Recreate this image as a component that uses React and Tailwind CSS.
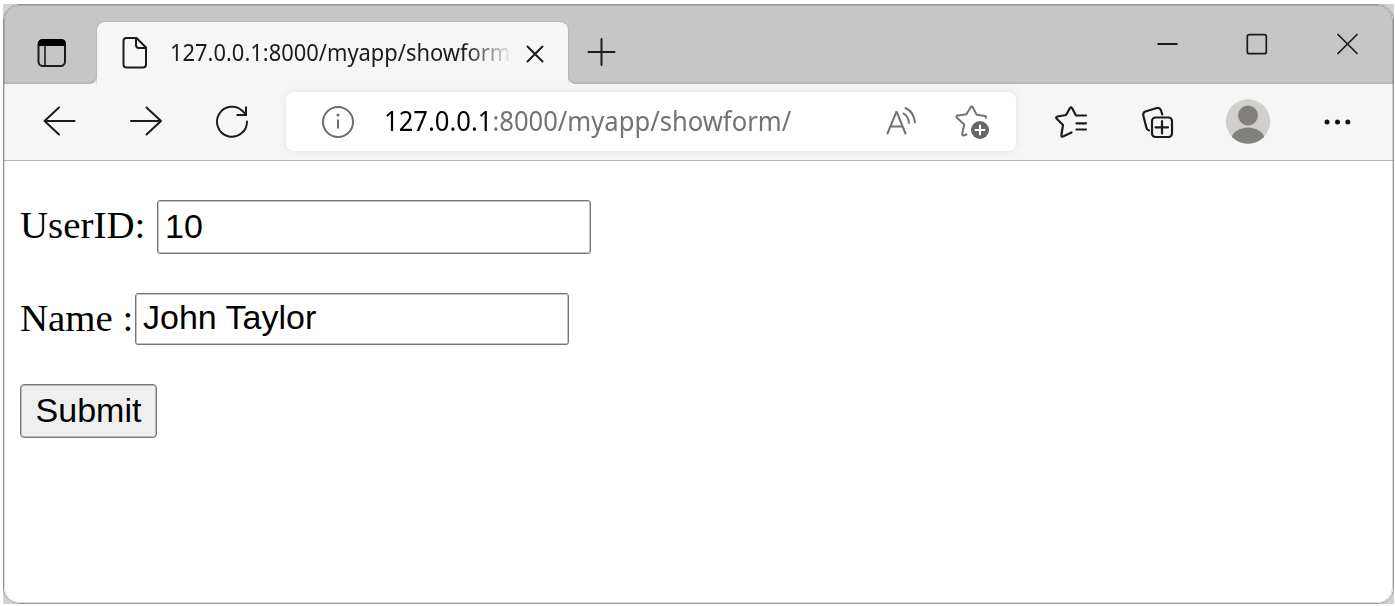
import React from "react";

function Icon({ box, className = "", children, color = "#1b1b1b", width = 2 }) {
  const [, , w, h] = box.split(" ");
  return (
    <svg
      viewBox={box}
      width={w}
      height={h}
      fill="none"
      stroke={color}
      strokeWidth={width}
      strokeLinecap="round"
      strokeLinejoin="round"
      className={`shrink-0 ${className}`}
    >
      {children}
    </svg>
  );
}

function TabStrip() {
  return (
    <div className="flex h-[79px] shrink-0 bg-[#f6f6f6]">
      <div className="w-[93px] shrink-0 rounded-br-lg bg-[#c6c6c6] pl-8 pt-[33px] shadow-[inset_0_-2px_1px_#b6b6b6]">
        <Icon box="36 38 32 30">
          <rect x="38.5" y="40" width="26.5" height="26" rx="4.5" />
          <path d="M38 46v-2q0-5 5-5h18q5 0 5 5v2z" fill="#000" stroke="none" />
          <path d="M45 46v19" strokeWidth="1.6" />
        </Icon>
      </div>
      <div className="w-[471px] shrink-0 bg-[#c6c6c6] pt-[17px]">
        <div className="flex h-[62px] items-center rounded-t-lg bg-[#f6f6f6] pl-6 shadow-[0_0_2px_#999] [clip-path:inset(-2px_-2px_0_-2px)]">
          <Icon box="121 36 28 34">
            <path d="M126.500 38h10l9.500 9.500v17q0 3-3 3h-16.500q-3 0-3-3v-23.500q0-3 3-3z" />
            <path d="M136 38v7q0 3 3 3h7" />
          </Icon>
          <div className="mb-[3px] ml-[21px] w-[339px] overflow-hidden whitespace-nowrap font-['Noto_Sans'] text-[23.5px] leading-8 text-[#1b1b1b] [mask-image:linear-gradient(to_right,#000_87%,transparent_101%)]">
            <span className="inline-block origin-left scale-x-[0.932]">127.0.0.1:8000/myapp/showform</span>
          </div>
          <Icon box="524 43 22 22" className="ml-[15px] mt-[2px]">
            <path d="M527.500 46.500l15 15M542.500 46.500l-15 15" />
          </Icon>
        </div>
      </div>
      <div className="flex grow rounded-bl-lg bg-[#c6c6c6] pl-[18px] shadow-[inset_0_-2px_1px_#b6b6b6]">
        <Icon box="586 36 30 32" className="mt-[31px]">
          <path d="M588.500 52h26M601.500 39v26" />
        </Icon>
        <Icon box="1154 30 26 30" className="ml-auto mt-[25px]" width={1.8}>
          <path d="M1157.500 44h20" strokeLinecap="butt" />
        </Icon>
        <Icon box="1244 30 26 30" className="ml-16 mt-[25px]" width={1.7}>
          <rect x="1247.300" y="34.700" width="19" height="19" rx="2" />
        </Icon>
        <Icon box="1334 30 26 30" className="ml-16 mr-[33px] mt-[25px]" width={1.7}>
          <path d="M1338 34.500l19 19M1357 34.500l-19 19" />
        </Icon>
      </div>
    </div>
  );
}

function Toolbar() {
  return (
    <div className="flex h-[77px] shrink-0 items-center border-b border-[#b4b4b4] bg-[#f6f6f6]">
      <Icon box="42 105 36 34" className="ml-[38px]">
        <path d="M44.500 121h30M59 107.500l-14.500 13.500 14.500 13.500" />
      </Icon>
      <Icon box="128 105 36 34" className="ml-[50px]">
        <path d="M131 121h30M146.500 107.500l14.500 13.500-14.500 13.500" />
      </Icon>
      <Icon box="214 104 36 36" className="ml-[50px]">
        <path d="M247 121.500A15 15 0 1 1 243 111.500l3 3" />
        <path d="M246 106.500v8.500h-9.500" strokeLinecap="butt" strokeLinejoin="miter" />
      </Icon>
      <div className="mb-px ml-9 flex h-[59px] w-[730px] items-center rounded-lg bg-white shadow-[0_0_7px_#e2e2e2]">
        <Icon box="320 104 36 36" className="ml-[34px]" color="#6c6c6c">
          <circle cx="338" cy="122" r="15" />
          <path d="M338 119.500v9" strokeLinecap="butt" />
          <circle cx="338" cy="115" r="1.600" fill="#6c6c6c" stroke="none" />
        </Icon>
        <div className="mb-[3px] ml-7 w-[430px] whitespace-nowrap font-['Noto_Sans'] text-[28px] leading-10 text-[#737373]">
          <span className="inline-block origin-left scale-x-[0.914]">
            <span className="text-black">127.0.0.1</span>:8000/myapp/showform/
          </span>
        </div>
        <Icon box="884 102 36 38" className="ml-[70px]" color="#737373">
          <path d="M887.500 132.500l9-22 9 22M890.500 125.500h12" strokeLinejoin="bevel" />
          <path d="M903.500 112.500q5 3 5.500 9.500M905.500 107q8.500 4 9.500 14.500" />
        </Icon>
        <Icon box="952 102 40 40" className="ml-8" color="#737373">
          <path d="M966.500 134.500l-3 1q-1.500 0-1.300-1.500l2-9.500-7.500-7q-1-1.500 1-2l8.700-1.200 4.300-7q1-1.500 2 0l4 7.400 8.500 1.300q1.500.5.500 1.800" />
          <circle cx="980" cy="130" r="9" fill="#666" stroke="none" />
          <path d="M975.500 130h9M980 125.500v9" stroke="#fff" />
        </Icon>
      </div>
      <Icon box="1052 102 40 38" className="ml-9" width={2.2}>
        <path d="M1071.500 131.500l-8.500 4q-2 .6-1.600-1.500l1.600-10-6.500-6.500q-1-1.500 1-2l8.500-1.500 4-7q1-1.500 2 0l4 7.500h10" />
        <path d="M1076.500 122.300h9.500M1076.500 128.500h9.500" />
      </Icon>
      <Icon box="1138 102 40 38" className="ml-[46px]" width={2.2}>
        <path d="M1149 129.500q-2-.5-2.500-2.500l-3.200-12.500q-.5-3 2-4l11.500-3.500q3-.5 4 2l1.500 4.500" />
        <rect x="1152" y="116.500" width="20" height="19.500" rx="3.500" />
        <path d="M1155.500 126.300h12.500M1162 120v12.500" />
      </Icon>
      <svg viewBox="1226 99.500 45 45" width="45" height="45" className="mb-px ml-12 shrink-0">
        <clipPath id="avatar"><circle cx="1248" cy="122" r="22.200" /></clipPath>
        <circle cx="1248" cy="122" r="22.200" fill="#d0cfcb" />
        <circle cx="1248" cy="116" r="10" fill="#81807e" />
        <ellipse cx="1248" cy="141" rx="17" ry="13" fill="#81807e" clipPath="url(#avatar)" />
      </svg>
      <svg viewBox="1321 112 32 20" width="32" height="20" className="ml-[50px] shrink-0" fill="#111">
        <circle cx="1327" cy="122" r="2.500" />
        <circle cx="1337.500" cy="122" r="2.500" />
        <circle cx="1347.800" cy="122" r="2.500" />
      </svg>
    </div>
  );
}

const field =
  "w-[434px] rounded-[3px] border border-[#767676] bg-white pl-[7px] font-['Liberation_Sans'] text-[34px] text-black shadow-[inset_0_0_0_1px_#c4c4c4] outline-none";

function Form() {
  return (
    <form
      className="flex grow flex-col items-start bg-white pl-4 pt-[39px] font-['Liberation_Serif'] text-[38.9px] leading-[50px] text-black"
      onSubmit={(e) => e.preventDefault()}
    >
      <label className="flex h-[54px]">
        <span className="w-[137px]">UserID:</span>
        <input className={`h-[54px] pb-0.5 ${field}`} defaultValue="10" />
      </label>
      <label className="mt-[39px] flex h-[52px]">
        <span className="w-[115px] whitespace-nowrap">Name :</span>
        <input className={`h-[52px] pb-1 ${field}`} defaultValue="John Taylor" />
      </label>
      <button className="mt-[39px] h-[54px] w-[137px] rounded-[4px] border border-[#767676] bg-[#efefef] pb-1.5 font-['Liberation_Sans'] text-[34px] shadow-[inset_0_0_0_1px_#bcbcbc]">
        Submit
      </button>
    </form>
  );
}

export default function App() {
  return (
    <div className="h-[606px] w-[1395px] overflow-hidden bg-white pl-[3px] pt-1">
      <div className="h-[600px] w-[1391px] bg-[#d2d2d2]">
        <div className="relative flex h-full flex-col overflow-hidden rounded-2xl border border-[#979797] bg-white">
          <TabStrip />
          <Toolbar />
          <Form />
          <div className="pointer-events-none absolute inset-0 rounded-[15px] border border-black/15" />
        </div>
      </div>
    </div>
  );
}
